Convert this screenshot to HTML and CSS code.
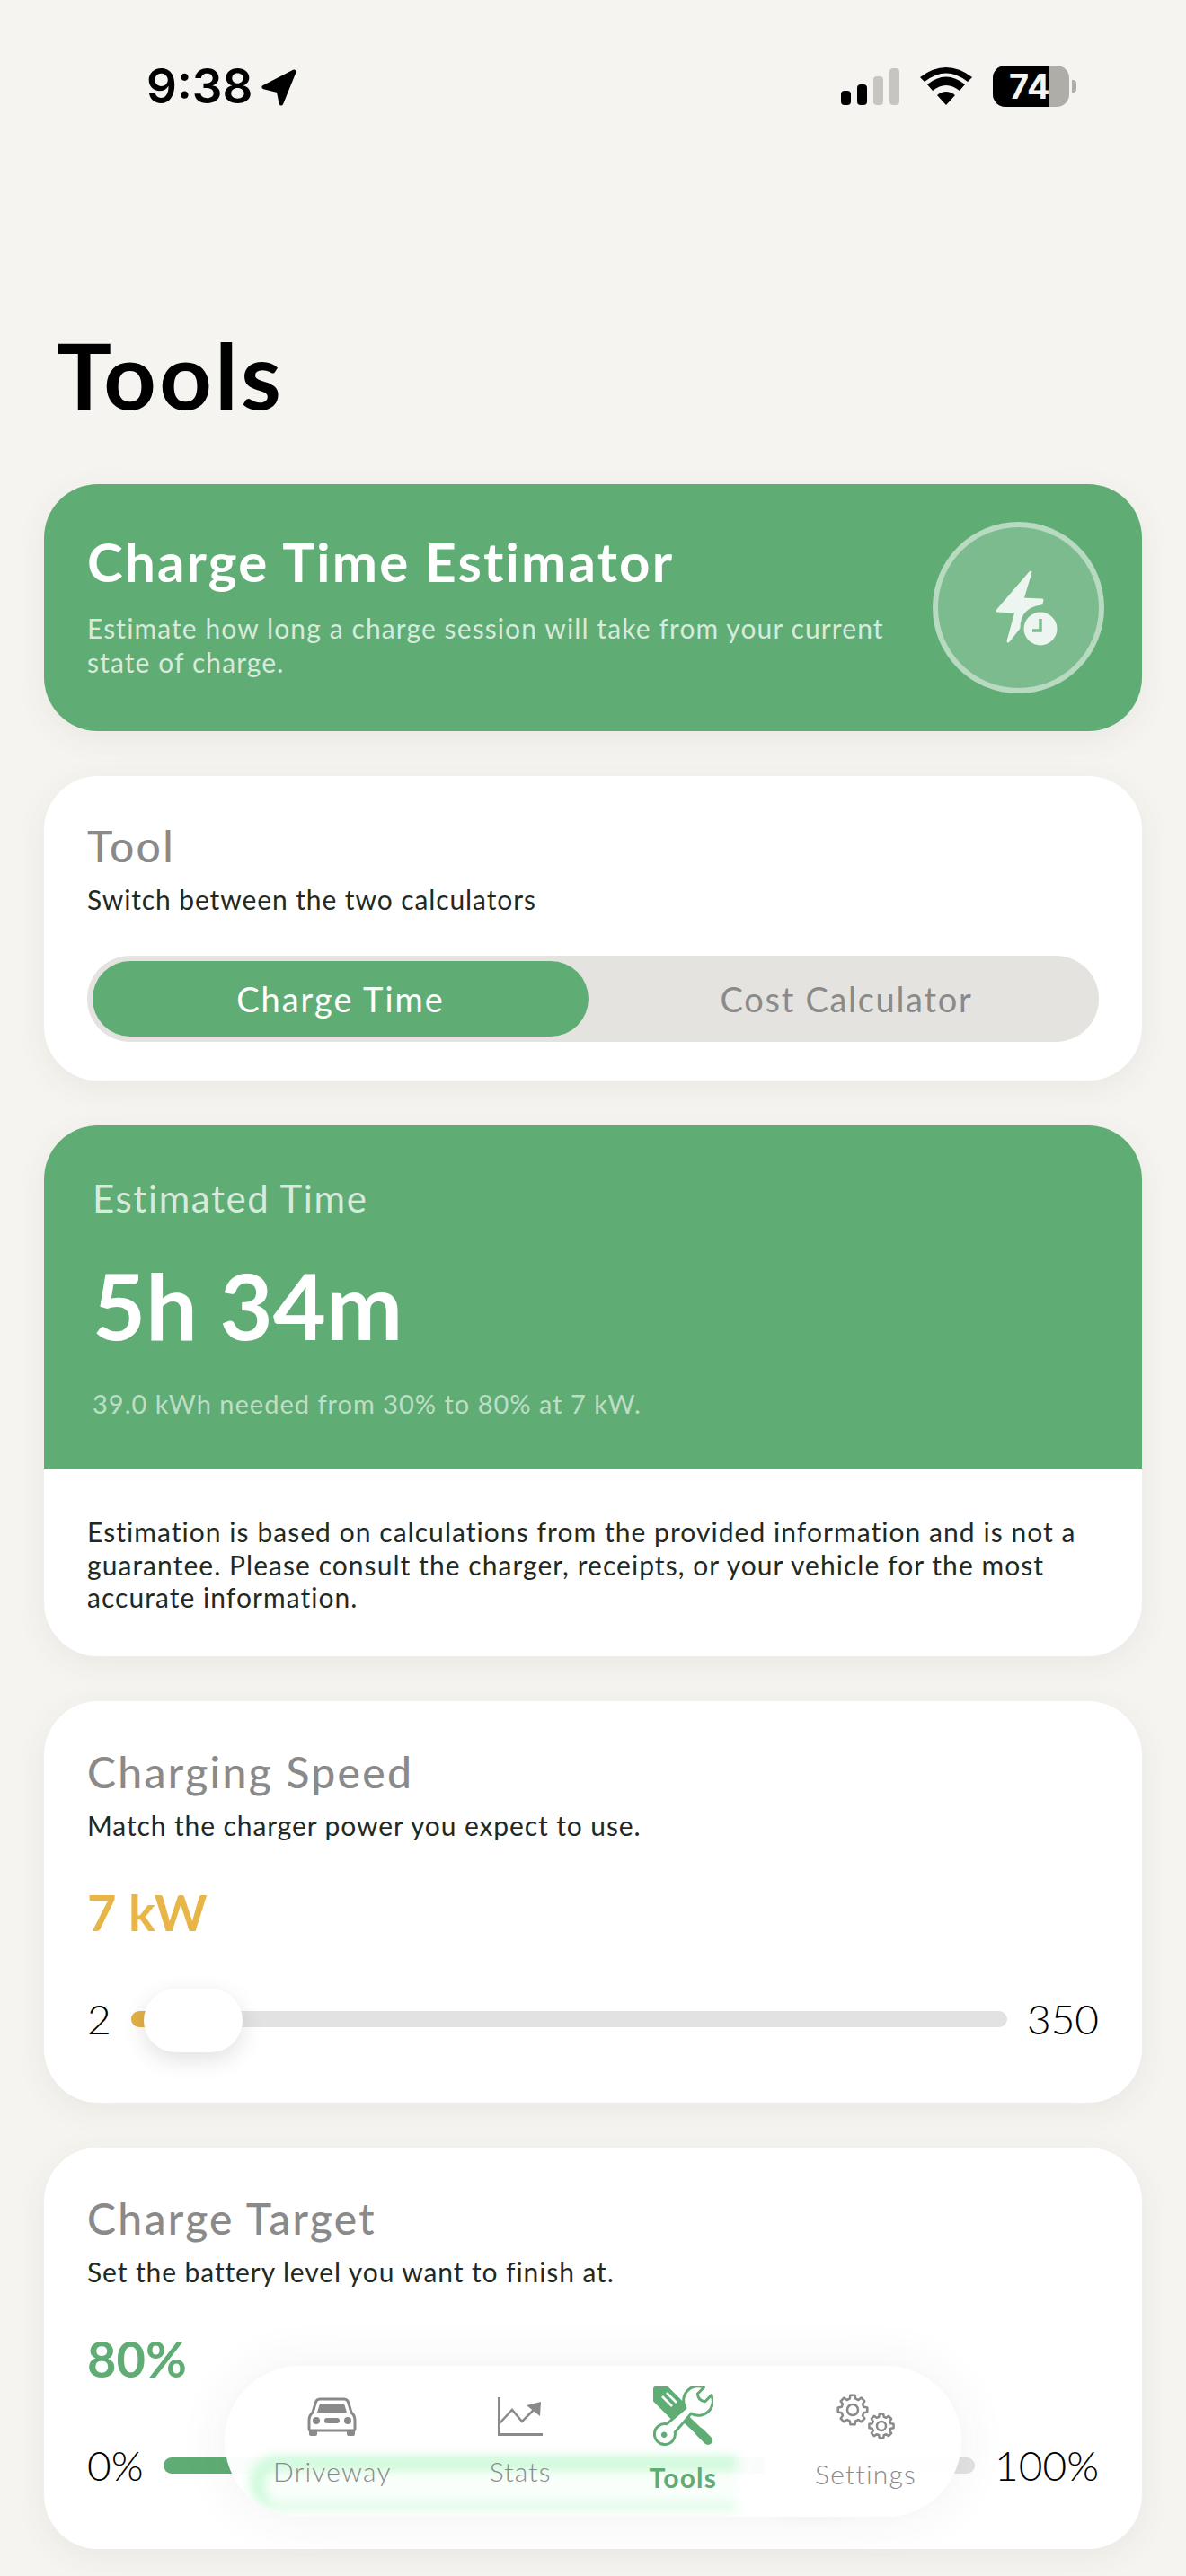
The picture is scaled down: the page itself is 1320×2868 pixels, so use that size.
FILE: index.html
```html
<!DOCTYPE html>
<html lang="en">
<head>
    <meta charset="UTF-8">
    <meta name="viewport" content="width=device-width, initial-scale=1.0">
    <title>Tools</title>
    <link rel="stylesheet" href="styles.css">
</head>
<body>
    <svg class="svg-defs" width="0" height="0">
        <defs>
            <polygon id="gear" points="-2.2,-8.21 -1.72,-10.86 1.72,-10.86 2.2,-8.21 4.25,-7.36 6.46,-8.9 8.9,-6.46 7.36,-4.25 8.21,-2.2 10.86,-1.72 10.86,1.72 8.21,2.2 7.36,4.25 8.9,6.46 6.46,8.9 4.25,7.36 2.2,8.21 1.72,10.86 -1.72,10.86 -2.2,8.21 -4.25,7.36 -6.46,8.9 -8.9,6.46 -7.36,4.25 -8.21,2.2 -10.86,1.72 -10.86,-1.72 -8.21,-2.2 -7.36,-4.25 -8.9,-6.46 -6.46,-8.9 -4.25,-7.36"/>
        </defs>
    </svg>

    <div class="screen">
        <div class="status-bar">
            <div class="status-left">
                <span class="clock">9:38</span>
                <svg class="location" width="40" height="42" viewBox="0 0 42 42">
                    <path d="M38 3 L3 21 L20 25 L23 40 Z" fill="#000" stroke="#000" stroke-width="5" stroke-linejoin="round"/>
                </svg>
            </div>
            <div class="status-right">
                <div class="signal">
                    <span class="bar bar-1"></span>
                    <span class="bar bar-2"></span>
                    <span class="bar bar-3 off"></span>
                    <span class="bar bar-4 off"></span>
                </div>
                <svg class="wifi" width="58" height="42" viewBox="0 0 58 42">
                    <path d="M29 42 L19 31 Q29 23 39 31 Z" fill="#000"/>
                    <path d="M14 26 L8 19 Q29 2 50 19 L44 26 Q29 14 14 26 Z" fill="#000"/>
                    <path d="M5 16 L0 11 Q29 -11 58 11 L53 16 Q29 -3 5 16 Z" fill="#000"/>
                </svg>
                <div class="battery">
                    <div class="battery-body">
                        <div class="battery-fill"></div>
                        <span class="battery-text">74</span>
                    </div>
                    <span class="battery-nub"></span>
                </div>
            </div>
        </div>

        <h1 class="page-title">Tools</h1>

        <section class="card hero">
            <div class="hero-text">
                <h2 class="hero-title">Charge Time Estimator</h2>
                <p class="hero-sub">Estimate how long a charge session will take from your current state of charge.</p>
            </div>
            <div class="hero-badge">
                <svg class="hero-icon" width="71" height="84" viewBox="0 0 71 84">
                    <path d="M40 2 L3 45 L24 46 L15 79 L27 64 Q27 40 52 37 L53 33 L31 32 Z" fill="#ecf5ef" stroke="#ecf5ef" stroke-width="3" stroke-linejoin="round"/>
                    <circle cx="51" cy="65" r="18.5" fill="#ecf5ef"/>
                    <path d="M51 54 V67 H42" fill="none" stroke="#7dbd92" stroke-width="3.5"/>
                </svg>
            </div>
        </section>

        <section class="card tool-card">
            <h3 class="card-title">Tool</h3>
            <p class="card-sub">Switch between the two calculators</p>
            <div class="segmented">
                <div class="segment active">Charge Time</div>
                <div class="segment">Cost Calculator</div>
            </div>
        </section>

        <section class="card result-card">
            <div class="result-top">
                <div class="result-label">Estimated Time</div>
                <div class="result-value">5h 34m</div>
                <div class="result-note">39.0 kWh needed from 30% to 80% at 7 kW.</div>
            </div>
            <p class="result-disclaimer">Estimation is based on calculations from the provided information and is not a guarantee. Please consult the charger, receipts, or your vehicle for the most accurate information.</p>
        </section>

        <section class="card slider-card">
            <h3 class="card-title">Charging Speed</h3>
            <p class="card-sub">Match the charger power you expect to use.</p>
            <div class="slider-value amber">7 kW</div>
            <div class="slider-row">
                <span class="slider-end">2</span>
                <div class="slider-track">
                    <div class="slider-fill amber-fill" style="width: 6%"></div>
                    <div class="slider-thumb" style="left: 14px"></div>
                </div>
                <span class="slider-end">350</span>
            </div>
        </section>

        <section class="card slider-card">
            <h3 class="card-title">Charge Target</h3>
            <p class="card-sub">Set the battery level you want to finish at.</p>
            <div class="slider-value green">80%</div>
            <div class="slider-row">
                <span class="slider-end">0%</span>
                <div class="slider-track">
                    <div class="slider-fill green-fill" style="width: 80%"></div>
                    <div class="slider-thumb" style="left: 74%"></div>
                </div>
                <span class="slider-end">100%</span>
            </div>
        </section>
    </div>

    <nav class="tab-bar">
        <div class="tab-glow"></div>
        <div class="tab">
            <svg class="tab-icon icon-car" width="55" height="43" viewBox="0 0 55 43">
                <rect x="2" y="34" width="9" height="9" rx="2" fill="#8a8a8a"/>
                <rect x="44" y="34" width="9" height="9" rx="2" fill="#8a8a8a"/>
                <path d="M14 2 H41 Q45 2 46 7 L49 17 Q53 20 53 26 V35 Q53 37 51 37 H4 Q2 37 2 35 V26 Q2 20 6 17 L9 7 Q10 2 14 2 Z" fill="#fff" stroke="#8a8a8a" stroke-width="3"/>
                <path d="M14 7 H41 L44 17 H11 Z" fill="#8a8a8a"/>
                <circle cx="10" cy="26" r="4" fill="#8a8a8a"/>
                <circle cx="45" cy="26" r="4" fill="#8a8a8a"/>
                <rect x="19" y="23" width="17" height="6" rx="3" fill="#8a8a8a"/>
            </svg>
            <span class="tab-label">Driveway</span>
        </div>
        <div class="tab">
            <svg class="tab-icon icon-stats" width="50" height="43" viewBox="0 0 50 43">
                <path d="M1.5 0 V41.5 H50" fill="none" stroke="#8a8a8a" stroke-width="3"/>
                <path d="M2 29 L16 14 L27 27 L40 14" fill="none" stroke="#8a8a8a" stroke-width="2.5"/>
                <path d="M48 5 L32 9 L47 21 Z" fill="#8a8a8a"/>
            </svg>
            <span class="tab-label">Stats</span>
        </div>
        <div class="tab tab-active">
            <svg class="tab-icon icon-tools" width="67" height="66" viewBox="0 0 67 66">
                <path d="M9 9 L29 29" stroke="#5fad74" stroke-width="23" stroke-linecap="round"/>
                <path d="M29 29 L54 53" stroke="#5fad74" stroke-width="9"/>
                <path d="M52 51 L61 60" stroke="#5fad74" stroke-width="10" stroke-linecap="round"/>
                <path d="M10 11 L21 22 M15 7 L26 18" stroke="#fff" stroke-width="2.5"/>
                <g transform="translate(50 16) rotate(45)">
                    <path d="M-6 -15 A16 16 0 0 0 -4.5 15.5 L-6.5 43 A11.5 11.5 0 1 0 6.5 43 L4.5 15.5 A16 16 0 0 0 6 -15 L6 -5 Q0 0 -6 -5 Z" fill="#fff" stroke="#5fad74" stroke-width="3" stroke-linejoin="round"/>
                    <circle cx="0" cy="53.5" r="3.2" fill="#5fad74"/>
                </g>
            </svg>
            <span class="tab-label">Tools</span>
        </div>
        <div class="tab">
            <svg class="tab-icon icon-settings" width="65" height="51" viewBox="0 0 65 51">
                <g transform="translate(18 18) scale(1.5)" fill="none" stroke="#8a8a8a" stroke-width="1.7" stroke-linejoin="round">
                    <use href="#gear"/>
                    <circle r="4"/>
                </g>
                <g transform="translate(50 36) scale(1.25)" fill="none" stroke="#8a8a8a" stroke-width="2" stroke-linejoin="round">
                    <use href="#gear"/>
                    <circle r="4"/>
                </g>
            </svg>
            <span class="tab-label">Settings</span>
        </div>
    </nav>
</body>
</html>
```

FILE: styles.css
```css
html, body {
    margin: 0;
    padding: 0;
}

body {
    position: relative;
    width: 1320px;
    height: 2868px;
    overflow: hidden;
    background-color: #f5f4f0;
    font-family: 'Lato', 'Noto Sans', sans-serif;
    color: #1f2a24;
}

h1, h2, h3, p {
    margin: 0;
}

.svg-defs {
    position: absolute;
}

.screen {
    padding: 0 49px;
}

/* status bar */
.status-bar {
    display: flex;
    justify-content: space-between;
    align-items: center;
    height: 192px;
    padding: 0 73px 0 114px;
    box-sizing: border-box;
}

.status-left {
    display: flex;
    align-items: center;
    gap: 10px;
}

.clock {
    font-family: 'Inter', sans-serif;
    font-size: 53px;
    font-weight: 600;
    line-height: 1;
    color: #000;
}

.location {
    margin-top: 2px;
}

.status-right {
    display: flex;
    align-items: center;
    gap: 23px;
}

.signal {
    display: flex;
    align-items: flex-end;
    gap: 7px;
    height: 41px;
}

.bar {
    width: 11px;
    border-radius: 4px;
    background-color: #000;
}

.bar.off {
    background-color: #c6c5c0;
}

.bar-1 { height: 16px; }
.bar-2 { height: 23px; }
.bar-3 { height: 32px; }
.bar-4 { height: 41px; }

.battery {
    display: flex;
    align-items: center;
    gap: 3px;
}

.battery-body {
    position: relative;
    width: 85px;
    height: 46px;
    border-radius: 14px;
    overflow: hidden;
    background-color: #aeada8;
}

.battery-fill {
    width: 63px;
    height: 100%;
    background-color: #000;
}

.battery-text {
    position: absolute;
    top: 0;
    left: 18px;
    font-family: 'Inter', sans-serif;
    font-size: 38px;
    font-weight: 700;
    line-height: 46px;
    color: #f5f4f0;
}

.battery-nub {
    width: 5px;
    height: 14px;
    border-radius: 0 4px 4px 0;
    background-color: #aeada8;
}

/* page title */
.page-title {
    margin: 170px 0 0 14px;
    font-size: 102px;
    font-weight: 700;
    line-height: 110px;
    letter-spacing: 3.4px;
    color: #000;
}

/* cards */
.card {
    margin-top: 50px;
    border-radius: 60px;
    background-color: #fff;
    box-shadow: 0 8px 34px rgba(70, 70, 60, 0.07);
}

.hero {
    display: flex;
    align-items: center;
    justify-content: space-between;
    height: 275px;
    margin-top: 67px;
    padding: 0 42px 0 48px;
    box-sizing: border-box;
    background-color: #5fad74;
    color: #fff;
}

.hero-text {
    width: 900px;
    padding-bottom: 8px;
}

.hero-title {
    font-size: 60px;
    font-weight: 700;
    line-height: 72px;
    letter-spacing: 2.2px;
}

.hero-sub {
    margin-top: 19px;
    font-size: 30px;
    font-weight: 400;
    line-height: 38px;
    letter-spacing: 1.1px;
    color: rgba(255, 255, 255, 0.75);
}

.hero-badge {
    display: flex;
    align-items: center;
    justify-content: center;
    width: 191px;
    height: 191px;
    border: 6px solid rgba(255, 255, 255, 0.45);
    border-radius: 50%;
    box-sizing: border-box;
    background-color: rgba(255, 255, 255, 0.18);
}

.hero-icon {
    margin-left: 17px;
}

.card-title {
    font-size: 48px;
    font-weight: 500;
    line-height: 58px;
    letter-spacing: 2.3px;
    color: #8a8a8a;
}

.card-sub {
    margin-top: 12px;
    font-size: 30px;
    line-height: 36px;
    letter-spacing: 0.9px;
    color: #1f2a24;
}

.tool-card {
    height: 339px;
    padding: 49px 48px 0;
    box-sizing: border-box;
}

.segmented {
    display: grid;
    grid-template-columns: 552px 1fr;
    height: 96px;
    margin-top: 45px;
    padding: 6px;
    border-radius: 48px;
    box-sizing: border-box;
    background-color: #e4e3df;
}

.segment {
    padding-left: 12px;
    border-radius: 42px;
    font-size: 38px;
    line-height: 84px;
    letter-spacing: 1.7px;
    text-align: center;
    color: #8a8a8a;
}

.segment.active {
    padding-left: 0;
    letter-spacing: 2px;
    background-color: #5fad74;
    color: #fff;
}

/* result */
.result-card {
    height: 591px;
    overflow: hidden;
}

.result-top {
    height: 382px;
    padding: 56px 54px 0;
    box-sizing: border-box;
    background-color: #5fad74;
    color: #fff;
}

.result-label {
    font-size: 42px;
    line-height: 50px;
    letter-spacing: 1.6px;
    color: rgba(255, 255, 255, 0.75);
}

.result-value {
    margin-top: 34px;
    font-size: 102px;
    font-weight: 700;
    line-height: 120px;
}

.result-note {
    margin-top: 32px;
    font-size: 29px;
    line-height: 36px;
    letter-spacing: 1px;
    color: rgba(255, 255, 255, 0.6);
}

.result-disclaimer {
    padding: 52px 48px 0;
    font-size: 30px;
    line-height: 36.5px;
    letter-spacing: 1.05px;
}

/* sliders */
.slider-card {
    height: 447px;
    padding: 50px 48px 0;
    box-sizing: border-box;
}

.slider-value {
    margin-top: 44px;
    font-size: 56px;
    font-weight: 700;
    line-height: 70px;
}

.amber { color: #e8b547; }
.green { color: #5fad74; }

.slider-row {
    display: flex;
    align-items: center;
    gap: 22px;
    margin-top: 56px;
}

.slider-end {
    font-size: 46px;
    font-weight: 300;
    line-height: 56px;
    color: #000;
}

.slider-track {
    position: relative;
    flex: 1;
    height: 18px;
    border-radius: 9px;
    background-color: #e2e2e2;
}

.slider-fill {
    height: 100%;
    border-radius: 9px 0 0 9px;
}

.amber-fill { background-color: #e2b046; }
.green-fill { background-color: #5fad74; }

.slider-thumb {
    position: absolute;
    top: -25px;
    width: 110px;
    height: 71px;
    border-radius: 36px;
    background-color: #fff;
    box-shadow: 0 8px 26px rgba(0, 0, 0, 0.12);
}

/* floating tab bar */
.tab-bar {
    position: absolute;
    left: 250px;
    top: 2634px;
    display: flex;
    justify-content: space-between;
    width: 820px;
    height: 168px;
    padding: 0 50px 0 54px;
    box-sizing: border-box;
    overflow: hidden;
    border-radius: 84px;
    background-color: rgba(255, 255, 255, 0.97);
    box-shadow: 0 0 60px rgba(60, 60, 60, 0.07);
}

.tab-glow {
    position: absolute;
    left: 28px;
    top: 100px;
    width: 542px;
    height: 60px;
    border: solid #cdfada;
    border-width: 16px 0 6px 16px;
    border-radius: 50px 0 0 50px;
    box-sizing: border-box;
    background-color: rgba(225, 250, 232, 0.2);
    filter: blur(6px);
}

.tab {
    position: relative;
    display: flex;
    flex-direction: column;
    align-items: center;
    color: #8a8a8a;
}

.tab-icon {
    display: block;
}

.icon-car { margin-top: 35px; }
.icon-stats { margin-top: 35px; }
.icon-tools { margin-top: 23px; }
.icon-settings { margin-top: 31px; }

.tab-label {
    margin-top: 21px;
    font-size: 30px;
    font-weight: 300;
    line-height: 36px;
    letter-spacing: 1.2px;
}

.tab-active {
    color: #5fad74;
}

.tab-active .tab-label {
    margin-top: 17px;
    font-weight: 700;
}

.icon-settings + .tab-label {
    margin-top: 20px;
}
```
